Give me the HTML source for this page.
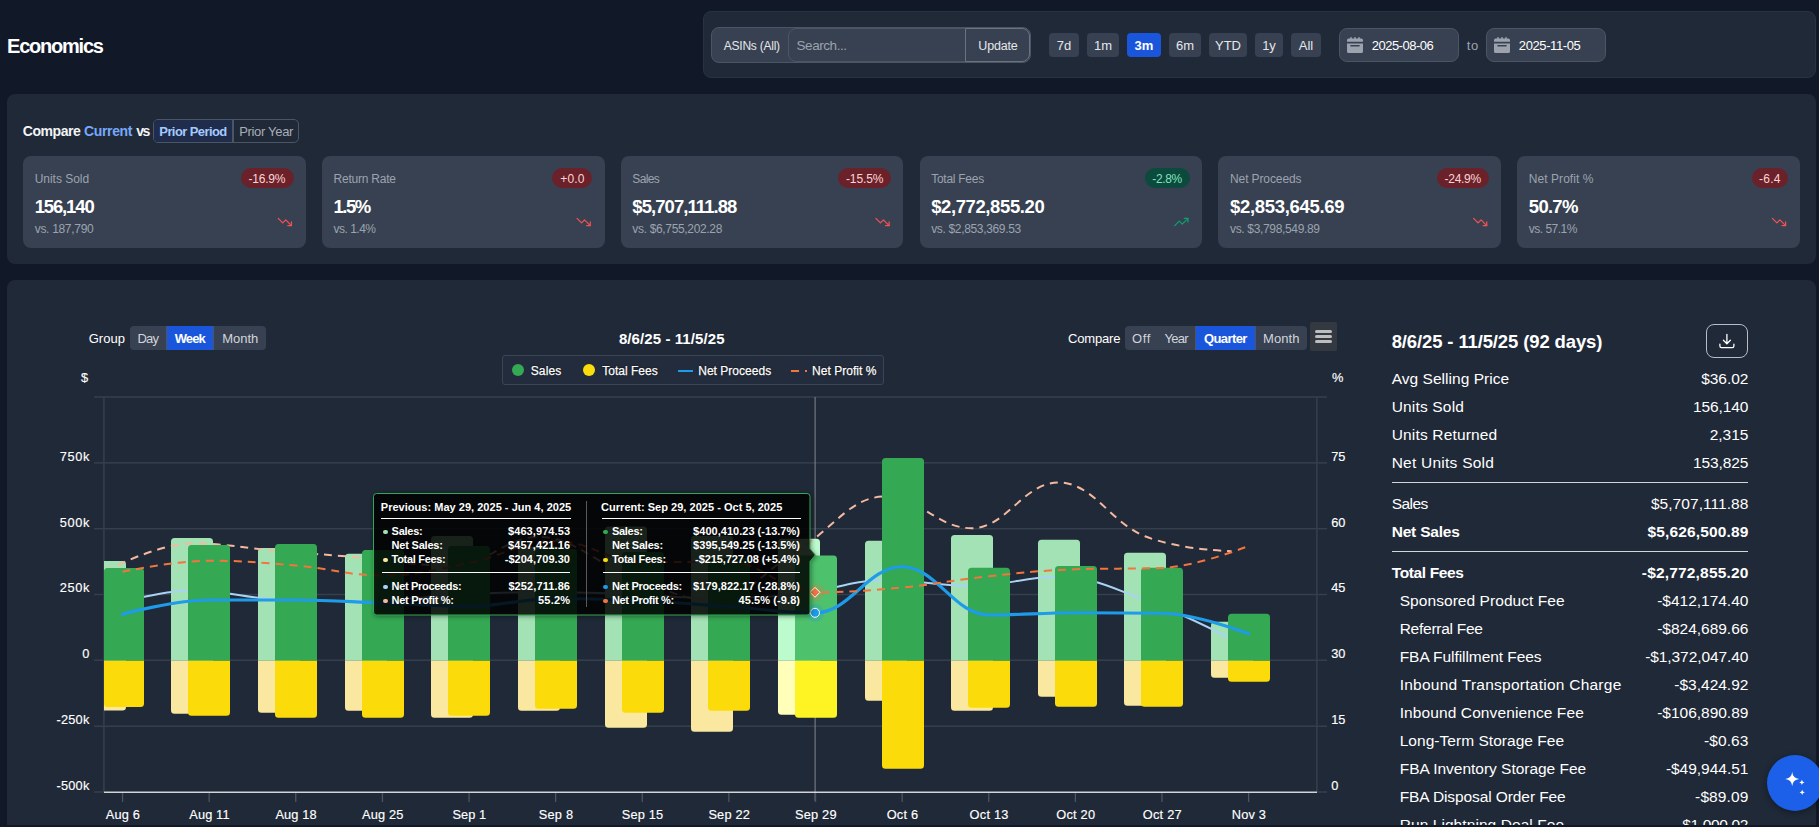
<!DOCTYPE html>
<html lang="en"><head><meta charset="utf-8"><title>Economics</title>
<style>
html,body{margin:0;padding:0;}
body{width:1819px;height:827px;overflow:hidden;background:#111827;position:relative;font-family:"Liberation Sans", sans-serif;}
.b{position:absolute;box-sizing:border-box;}
.t{position:absolute;white-space:nowrap;font-family:"Liberation Sans", sans-serif;}
.hc{text-shadow:0 0 1px rgba(0,0,0,.9),0 0 2px rgba(0,0,0,.6);}
svg{position:absolute;left:0;top:0;}
</style></head>
<body>
<span class="t" style="left:7.00px;top:32px;font-size:20px;line-height:28px;color:#fff;font-weight:700;letter-spacing:-1.213px;">Economics</span>
<div class="b" style="left:703px;top:11px;width:1113px;height:67px;background:#1f2937;border:1px solid #283242;border-radius:8px;"></div>
<div class="b" style="left:711px;top:27px;width:320px;height:36px;background:#374151;border:1px solid #4b5563;border-radius:8px;"></div>
<div class="b" style="left:788px;top:28px;width:178px;height:34px;background:#374151;border:1px solid #4b5563;border-radius:8px 0 0 8px;"></div>
<div class="b" style="left:965px;top:28px;width:65px;height:34px;background:#374151;border:1px solid #6b7280;border-radius:0 8px 8px 0;border-left:1px solid #6b7280;"></div>
<span class="t" style="left:723.80px;top:38px;font-size:12px;line-height:17px;color:#e5e7eb;letter-spacing:-0.237px;">ASINs (All)</span>
<span class="t" style="left:796.50px;top:36px;font-size:13.5px;line-height:19px;color:#9ca3af;letter-spacing:-0.441px;">Search...</span>
<span class="t" style="left:978.30px;top:37px;font-size:12.5px;line-height:18px;color:#e5e7eb;letter-spacing:-0.163px;">Update</span>
<div class="b" style="left:1049px;top:33px;width:30px;height:24px;background:#374151;border-radius:4px;"></div>
<span class="t" style="left:1056.77px;top:37px;font-size:13px;line-height:18px;color:#e5e7eb;">7d</span>
<div class="b" style="left:1087px;top:33px;width:32px;height:24px;background:#374151;border-radius:4px;"></div>
<span class="t" style="left:1093.97px;top:37px;font-size:13px;line-height:18px;color:#e5e7eb;">1m</span>
<div class="b" style="left:1127px;top:33px;width:34px;height:24px;background:#1a56db;border-radius:4px;"></div>
<span class="t" style="left:1134.60px;top:37px;font-size:13px;line-height:18px;color:#fff;font-weight:700;">3m</span>
<div class="b" style="left:1169px;top:33px;width:32px;height:24px;background:#374151;border-radius:4px;"></div>
<span class="t" style="left:1175.97px;top:37px;font-size:13px;line-height:18px;color:#e5e7eb;">6m</span>
<div class="b" style="left:1209px;top:33px;width:38px;height:24px;background:#374151;border-radius:4px;"></div>
<span class="t" style="left:1215.00px;top:37px;font-size:13px;line-height:18px;color:#e5e7eb;">YTD</span>
<div class="b" style="left:1255px;top:33px;width:28px;height:24px;background:#374151;border-radius:4px;"></div>
<span class="t" style="left:1262.13px;top:37px;font-size:13px;line-height:18px;color:#e5e7eb;">1y</span>
<div class="b" style="left:1291px;top:33px;width:30px;height:24px;background:#374151;border-radius:4px;"></div>
<span class="t" style="left:1298.77px;top:37px;font-size:13px;line-height:18px;color:#e5e7eb;">All</span>
<div class="b" style="left:1339px;top:28px;width:120px;height:34px;background:#374151;border:1px solid #4b5563;border-radius:8px;"></div>
<svg style="left:1347px;top:37px" width="16" height="16" viewBox="0 0 20 20"><path fill="#9ca3af" d="M20 4a2 2 0 0 0-2-2h-2V1a1 1 0 0 0-2 0v1h-3V1a1 1 0 0 0-2 0v1H6V1a1 1 0 0 0-2 0v1H2a2 2 0 0 0-2 2v2h20V4ZM0 18a2 2 0 0 0 2 2h16a2 2 0 0 0 2-2V8H0v10Zm5-8h10a1 1 0 0 1 0 2H5a1 1 0 0 1 0-2Z"/></svg>
<span class="t" style="left:1371.70px;top:37px;font-size:13px;line-height:18px;color:#fff;letter-spacing:-0.500px;">2025-08-06</span>
<div class="b" style="left:1486px;top:28px;width:120px;height:34px;background:#374151;border:1px solid #4b5563;border-radius:8px;"></div>
<svg style="left:1494px;top:37px" width="16" height="16" viewBox="0 0 20 20"><path fill="#9ca3af" d="M20 4a2 2 0 0 0-2-2h-2V1a1 1 0 0 0-2 0v1h-3V1a1 1 0 0 0-2 0v1H6V1a1 1 0 0 0-2 0v1H2a2 2 0 0 0-2 2v2h20V4ZM0 18a2 2 0 0 0 2 2h16a2 2 0 0 0 2-2V8H0v10Zm5-8h10a1 1 0 0 1 0 2H5a1 1 0 0 1 0-2Z"/></svg>
<span class="t" style="left:1518.80px;top:37px;font-size:13px;line-height:18px;color:#fff;letter-spacing:-0.394px;">2025-11-05</span>
<span class="t" style="left:1466.80px;top:37px;font-size:13px;line-height:18px;color:#9ca3af;letter-spacing:0.656px;">to</span>
<div class="b" style="left:7px;top:94px;width:1809px;height:170px;background:#1f2937;border-radius:8px;"></div>
<span class="t" style="left:22.80px;top:121px;font-size:14px;line-height:20px;color:#f3f4f6;font-weight:700;letter-spacing:-0.448px;">Compare</span>
<span class="t" style="left:84.10px;top:121px;font-size:14px;line-height:20px;color:#76a9fa;font-weight:700;letter-spacing:-0.377px;">Current</span>
<span class="t" style="left:136.20px;top:121px;font-size:14px;line-height:20px;color:#f3f4f6;font-weight:700;letter-spacing:-1.500px;">vs</span>
<div class="b" style="left:153px;top:119px;width:146px;height:24px;border:1px solid #4b5563;border-radius:5px;"></div>
<div class="b" style="left:154px;top:120px;width:79.5px;height:22px;background:#202c4c;border-radius:4px 0 0 4px;border-right:2px solid #4b5563;"></div>
<span class="t" style="left:159.30px;top:123px;font-size:13px;line-height:18px;color:#a4cafe;font-weight:700;letter-spacing:-0.584px;">Prior Period</span>
<span class="t" style="left:239.20px;top:123px;font-size:13px;line-height:18px;color:#a9aeb8;letter-spacing:-0.322px;">Prior Year</span>
<div class="b" style="left:23.0px;top:156px;width:282.83px;height:92px;background:#374151;border-radius:8px;"></div>
<span class="t" style="left:34.70px;top:171px;font-size:12px;line-height:17px;color:#9ca3af;letter-spacing:-0.023px;">Units Sold</span>
<span class="t" style="left:34.70px;top:194px;font-size:18.5px;line-height:26px;color:#fff;font-weight:700;letter-spacing:-1.146px;">156,140</span>
<span class="t" style="left:34.70px;top:221px;font-size:12px;line-height:17px;color:#9ca3af;letter-spacing:-0.305px;">vs. 187,790</span>
<div class="b" style="left:240.52999999999997px;top:168px;width:53px;height:20px;background:#6b2129;border-radius:10px;"></div>
<span class="t" style="left:248.53px;top:171px;font-size:12px;line-height:17px;color:#fbd5d5;letter-spacing:-0.206px;">-16.9%</span>
<svg width="1819" height="300" viewBox="0 0 1819 300"><g transform="translate(277.63 214.8) scale(0.6)" fill="none" stroke="#f05252" stroke-width="2.1" stroke-linecap="round" stroke-linejoin="round"><polyline points="23 18 13.5 8.5 8.5 13.5 1 6"/><polyline points="17 18 23 18 23 12"/></g></svg>
<div class="b" style="left:321.83px;top:156px;width:282.83px;height:92px;background:#374151;border-radius:8px;"></div>
<span class="t" style="left:333.53px;top:171px;font-size:12px;line-height:17px;color:#9ca3af;letter-spacing:-0.220px;">Return Rate</span>
<span class="t" style="left:333.53px;top:194px;font-size:18.5px;line-height:26px;color:#fff;font-weight:700;letter-spacing:-1.500px;">1.5%</span>
<span class="t" style="left:333.53px;top:221px;font-size:12px;line-height:17px;color:#9ca3af;letter-spacing:-0.504px;">vs. 1.4%</span>
<div class="b" style="left:552.36px;top:168px;width:40px;height:20px;background:#6b2129;border-radius:10px;"></div>
<span class="t" style="left:560.36px;top:171px;font-size:12px;line-height:17px;color:#fbd5d5;letter-spacing:0.099px;">+0.0</span>
<svg width="1819" height="300" viewBox="0 0 1819 300"><g transform="translate(576.46 214.8) scale(0.6)" fill="none" stroke="#f05252" stroke-width="2.1" stroke-linecap="round" stroke-linejoin="round"><polyline points="23 18 13.5 8.5 8.5 13.5 1 6"/><polyline points="17 18 23 18 23 12"/></g></svg>
<div class="b" style="left:620.67px;top:156px;width:282.83px;height:92px;background:#374151;border-radius:8px;"></div>
<span class="t" style="left:632.37px;top:171px;font-size:12px;line-height:17px;color:#9ca3af;letter-spacing:-0.633px;">Sales</span>
<span class="t" style="left:632.37px;top:194px;font-size:18.5px;line-height:26px;color:#fff;font-weight:700;letter-spacing:-0.940px;">$5,707,111.88</span>
<span class="t" style="left:632.37px;top:221px;font-size:12px;line-height:17px;color:#9ca3af;letter-spacing:-0.339px;">vs. $6,755,202.28</span>
<div class="b" style="left:838.2px;top:168px;width:53px;height:20px;background:#6b2129;border-radius:10px;"></div>
<span class="t" style="left:845.95px;top:171px;font-size:12px;line-height:17px;color:#fbd5d5;letter-spacing:-0.106px;">-15.5%</span>
<svg width="1819" height="300" viewBox="0 0 1819 300"><g transform="translate(875.30 214.8) scale(0.6)" fill="none" stroke="#f05252" stroke-width="2.1" stroke-linecap="round" stroke-linejoin="round"><polyline points="23 18 13.5 8.5 8.5 13.5 1 6"/><polyline points="17 18 23 18 23 12"/></g></svg>
<div class="b" style="left:919.5px;top:156px;width:282.83px;height:92px;background:#374151;border-radius:8px;"></div>
<span class="t" style="left:931.20px;top:171px;font-size:12px;line-height:17px;color:#9ca3af;letter-spacing:-0.262px;">Total Fees</span>
<span class="t" style="left:931.20px;top:194px;font-size:18.5px;line-height:26px;color:#fff;font-weight:700;letter-spacing:-0.401px;">$2,772,855.20</span>
<span class="t" style="left:931.20px;top:221px;font-size:12px;line-height:17px;color:#9ca3af;letter-spacing:-0.339px;">vs. $2,853,369.53</span>
<div class="b" style="left:1144.53px;top:168px;width:45.5px;height:20px;background:#0b4a3c;border-radius:10px;"></div>
<span class="t" style="left:1152.28px;top:171px;font-size:12px;line-height:17px;color:#84e1bc;letter-spacing:-0.340px;">-2.8%</span>
<svg width="1819" height="300" viewBox="0 0 1819 300"><g transform="translate(1174.13 214.8) scale(0.6)" fill="none" stroke="#0e9f6e" stroke-width="2.1" stroke-linecap="round" stroke-linejoin="round"><polyline points="23 6 13.5 15.5 8.5 10.5 1 18"/><polyline points="17 6 23 6 23 12"/></g></svg>
<div class="b" style="left:1218.33px;top:156px;width:282.83px;height:92px;background:#374151;border-radius:8px;"></div>
<span class="t" style="left:1230.03px;top:171px;font-size:12px;line-height:17px;color:#9ca3af;letter-spacing:-0.109px;">Net Proceeds</span>
<span class="t" style="left:1230.03px;top:194px;font-size:18.5px;line-height:26px;color:#fff;font-weight:700;letter-spacing:-0.318px;">$2,853,645.69</span>
<span class="t" style="left:1230.03px;top:221px;font-size:12px;line-height:17px;color:#9ca3af;letter-spacing:-0.339px;">vs. $3,798,549.89</span>
<div class="b" style="left:1436.86px;top:168px;width:52px;height:20px;background:#6b2129;border-radius:10px;"></div>
<span class="t" style="left:1444.61px;top:171px;font-size:12px;line-height:17px;color:#fbd5d5;letter-spacing:-0.306px;">-24.9%</span>
<svg width="1819" height="300" viewBox="0 0 1819 300"><g transform="translate(1472.96 214.8) scale(0.6)" fill="none" stroke="#f05252" stroke-width="2.1" stroke-linecap="round" stroke-linejoin="round"><polyline points="23 18 13.5 8.5 8.5 13.5 1 6"/><polyline points="17 18 23 18 23 12"/></g></svg>
<div class="b" style="left:1517.17px;top:156px;width:282.83px;height:92px;background:#374151;border-radius:8px;"></div>
<span class="t" style="left:1528.87px;top:171px;font-size:12px;line-height:17px;color:#9ca3af;letter-spacing:0.043px;">Net Profit %</span>
<span class="t" style="left:1528.87px;top:194px;font-size:18.5px;line-height:26px;color:#fff;font-weight:700;letter-spacing:-0.742px;">50.7%</span>
<span class="t" style="left:1528.87px;top:221px;font-size:12px;line-height:17px;color:#9ca3af;letter-spacing:-0.525px;">vs. 57.1%</span>
<div class="b" style="left:1751.7px;top:168px;width:36px;height:20px;background:#6b2129;border-radius:10px;"></div>
<span class="t" style="left:1758.95px;top:171px;font-size:12px;line-height:17px;color:#fbd5d5;letter-spacing:0.271px;">-6.4</span>
<svg width="1819" height="300" viewBox="0 0 1819 300"><g transform="translate(1771.80 214.8) scale(0.6)" fill="none" stroke="#f05252" stroke-width="2.1" stroke-linecap="round" stroke-linejoin="round"><polyline points="23 18 13.5 8.5 8.5 13.5 1 6"/><polyline points="17 18 23 18 23 12"/></g></svg>
<div class="b" style="left:7px;top:280px;width:1809px;height:545px;background:#1f2937;border-radius:8px 8px 0 0;"></div>
<span class="t" style="left:88.70px;top:330px;font-size:13px;line-height:18px;color:#fff;letter-spacing:0.015px;">Group</span>
<div class="b" style="left:130px;top:326px;width:136px;height:24px;background:#374151;border-radius:4px;"></div>
<div class="b" style="left:166px;top:326px;width:48px;height:24px;background:#1a56db;border-left:1px solid #4b5563;border-right:1px solid #4b5563;"></div>
<span class="t" style="left:137.50px;top:330px;font-size:13px;line-height:18px;color:#d1d5db;letter-spacing:-0.812px;">Day</span>
<span class="t" style="left:174.70px;top:330px;font-size:13px;line-height:18px;color:#fff;font-weight:700;letter-spacing:-0.911px;">Week</span>
<span class="t" style="left:222.30px;top:330px;font-size:13px;line-height:18px;color:#d1d5db;letter-spacing:-0.035px;">Month</span>
<span class="t" style="left:618.90px;top:328px;font-size:15px;line-height:21px;color:#fff;font-weight:700;letter-spacing:0.089px;">8/6/25 - 11/5/25</span>
<span class="t" style="left:1067.90px;top:330px;font-size:13px;line-height:18px;color:#fff;letter-spacing:-0.145px;">Compare</span>
<div class="b" style="left:1125px;top:326px;width:182px;height:24px;background:#374151;border-radius:4px;"></div>
<div class="b" style="left:1195px;top:326px;width:61px;height:24px;background:#1a56db;border-left:1px solid #4b5563;border-right:1px solid #4b5563;"></div>
<span class="t" style="left:1131.95px;top:330px;font-size:13px;line-height:18px;color:#d1d5db;letter-spacing:0.695px;">Off</span>
<span class="t" style="left:1164.50px;top:330px;font-size:13px;line-height:18px;color:#d1d5db;letter-spacing:-0.760px;">Year</span>
<span class="t" style="left:1203.95px;top:330px;font-size:13px;line-height:18px;color:#fff;font-weight:700;letter-spacing:-0.578px;">Quarter</span>
<span class="t" style="left:1263.05px;top:330px;font-size:13px;line-height:18px;color:#d1d5db;letter-spacing:0.090px;">Month</span>
<div class="b" style="left:1309.5px;top:322.3px;width:27.7px;height:28.4px;background:#343841;border-radius:2px;"></div>
<div class="b" style="left:1315.3px;top:330px;width:16.8px;height:3.2px;background:#bebebe;border-radius:1.6px;"></div>
<div class="b" style="left:1315.3px;top:335px;width:16.8px;height:3.2px;background:#bebebe;border-radius:1.6px;"></div>
<div class="b" style="left:1315.3px;top:340px;width:16.8px;height:3.2px;background:#bebebe;border-radius:1.6px;"></div>
<div class="b" style="left:502px;top:355px;width:382px;height:30px;background:#232c3c;border:1px solid #3c4554;border-radius:3px;"></div>
<div class="b" style="left:512px;top:364px;width:12px;height:12px;border-radius:6px;background:#34a853"></div>
<div class="b" style="left:583px;top:364px;width:12px;height:12px;border-radius:6px;background:#fbdc0c"></div>
<div class="b" style="left:678px;top:370px;width:15px;height:2px;background:#1e9be9;"></div>
<div class="b" style="left:791px;top:370px;width:8px;height:2px;background:#f3743e;"></div>
<div class="b" style="left:805px;top:370px;width:2px;height:2px;background:#f3743e;"></div>
<span class="t hc" style="left:530.70px;top:363px;font-size:12px;line-height:17px;color:#fff;letter-spacing:0.142px;-webkit-text-stroke:0.25px #fff;">Sales</span>
<span class="t hc" style="left:602.20px;top:363px;font-size:12px;line-height:17px;color:#fff;letter-spacing:0.016px;-webkit-text-stroke:0.25px #fff;">Total Fees</span>
<span class="t hc" style="left:698.20px;top:363px;font-size:12px;line-height:17px;color:#fff;letter-spacing:0.027px;-webkit-text-stroke:0.25px #fff;">Net Proceeds</span>
<span class="t hc" style="left:812.00px;top:363px;font-size:12px;line-height:17px;color:#fff;letter-spacing:0.034px;-webkit-text-stroke:0.25px #fff;">Net Profit %</span>
<span class="t" style="left:81.10px;top:369px;font-size:12.8px;line-height:18px;color:#fff;-webkit-text-stroke:0.15px #fff;">$</span>
<span class="t" style="left:1332.10px;top:369px;font-size:12.8px;line-height:18px;color:#fff;-webkit-text-stroke:0.15px #fff;">%</span>
<svg width="1819" height="827" viewBox="0 0 1819 827">
<defs><clipPath id="cp"><rect x="104" y="397" width="1213" height="395"/></clipPath></defs>
<rect x="94" y="396.25" width="1233" height="1.5" fill="#363f4e"/>
<rect x="94" y="462.10" width="1233" height="1.5" fill="#363f4e"/>
<rect x="94" y="527.95" width="1233" height="1.5" fill="#363f4e"/>
<rect x="94" y="593.75" width="1233" height="1.5" fill="#363f4e"/>
<rect x="94" y="659.45" width="1233" height="1.5" fill="#363f4e"/>
<rect x="94" y="725.45" width="1233" height="1.5" fill="#363f4e"/>
<rect x="94" y="791.25" width="1233" height="1.5" fill="#363f4e"/>
<rect x="103.15" y="397" width="1.5" height="395" fill="#363f4e"/>
<rect x="1316.15" y="397" width="1.5" height="395" fill="#363f4e"/>
<rect x="814.6" y="397" width="1" height="404" fill="#83878e"/>
<g clip-path="url(#cp)">
<path d="M84 660.8V564.5A3.5 3.5 0 0 1 87.5 561H122.5A3.5 3.5 0 0 1 126 564.5V660.8Z" fill="#a3e2b5"/>
<path d="M84 660.8V707.0A3.5 3.5 0 0 0 87.5 710.5H122.5A3.5 3.5 0 0 0 126 707.0V660.8Z" fill="#fae8a0"/>
<path d="M171 660.8V541.5A3.5 3.5 0 0 1 174.5 538H209.5A3.5 3.5 0 0 1 213 541.5V660.8Z" fill="#a3e2b5"/>
<path d="M171 660.8V710.25A3.5 3.5 0 0 0 174.5 713.75H209.5A3.5 3.5 0 0 0 213 710.25V660.8Z" fill="#fae8a0"/>
<path d="M258 660.8V551.5A3.5 3.5 0 0 1 261.5 548H296.5A3.5 3.5 0 0 1 300 551.5V660.8Z" fill="#a3e2b5"/>
<path d="M258 660.8V709.25A3.5 3.5 0 0 0 261.5 712.75H296.5A3.5 3.5 0 0 0 300 709.25V660.8Z" fill="#fae8a0"/>
<path d="M345 660.8V557.25A3.5 3.5 0 0 1 348.5 553.75H383.5A3.5 3.5 0 0 1 387 557.25V660.8Z" fill="#a3e2b5"/>
<path d="M345 660.8V707.25A3.5 3.5 0 0 0 348.5 710.75H383.5A3.5 3.5 0 0 0 387 707.25V660.8Z" fill="#fae8a0"/>
<path d="M431 660.8V539.5A3.5 3.5 0 0 1 434.5 536H469.5A3.5 3.5 0 0 1 473 539.5V660.8Z" fill="#a3e2b5"/>
<path d="M431 660.8V714.25A3.5 3.5 0 0 0 434.5 717.75H469.5A3.5 3.5 0 0 0 473 714.25V660.8Z" fill="#fae8a0"/>
<path d="M518 660.8V549.9A3.5 3.5 0 0 1 521.5 546.4H556.5A3.5 3.5 0 0 1 560 549.9V660.8Z" fill="#a3e2b5"/>
<path d="M518 660.8V707.25A3.5 3.5 0 0 0 521.5 710.75H556.5A3.5 3.5 0 0 0 560 707.25V660.8Z" fill="#fae8a0"/>
<path d="M605 660.8V530.1A3.5 3.5 0 0 1 608.5 526.6H643.5A3.5 3.5 0 0 1 647 530.1V660.8Z" fill="#a3e2b5"/>
<path d="M605 660.8V724.25A3.5 3.5 0 0 0 608.5 727.75H643.5A3.5 3.5 0 0 0 647 724.25V660.8Z" fill="#fae8a0"/>
<path d="M691 660.8V539.2A3.5 3.5 0 0 1 694.5 535.7H729.5A3.5 3.5 0 0 1 733 539.2V660.8Z" fill="#a3e2b5"/>
<path d="M691 660.8V728.25A3.5 3.5 0 0 0 694.5 731.75H729.5A3.5 3.5 0 0 0 733 728.25V660.8Z" fill="#fae8a0"/>
<path d="M778 660.8V542.25A3.5 3.5 0 0 1 781.5 538.75H816.5A3.5 3.5 0 0 1 820 542.25V660.8Z" fill="#bcfbce"/>
<path d="M778 660.8V711.25A3.5 3.5 0 0 0 781.5 714.75H816.5A3.5 3.5 0 0 0 820 711.25V660.8Z" fill="#ffffb9"/>
<path d="M865 660.8V544.25A3.5 3.5 0 0 1 868.5 540.75H903.5A3.5 3.5 0 0 1 907 544.25V660.8Z" fill="#a3e2b5"/>
<path d="M865 660.8V697.25A3.5 3.5 0 0 0 868.5 700.75H903.5A3.5 3.5 0 0 0 907 697.25V660.8Z" fill="#fae8a0"/>
<path d="M951 660.8V538.5A3.5 3.5 0 0 1 954.5 535H989.5A3.5 3.5 0 0 1 993 538.5V660.8Z" fill="#a3e2b5"/>
<path d="M951 660.8V707.25A3.5 3.5 0 0 0 954.5 710.75H989.5A3.5 3.5 0 0 0 993 707.25V660.8Z" fill="#fae8a0"/>
<path d="M1038 660.8V543.25A3.5 3.5 0 0 1 1041.5 539.75H1076.5A3.5 3.5 0 0 1 1080 543.25V660.8Z" fill="#a3e2b5"/>
<path d="M1038 660.8V693.25A3.5 3.5 0 0 0 1041.5 696.75H1076.5A3.5 3.5 0 0 0 1080 693.25V660.8Z" fill="#fae8a0"/>
<path d="M1124 660.8V556.25A3.5 3.5 0 0 1 1127.5 552.75H1162.5A3.5 3.5 0 0 1 1166 556.25V660.8Z" fill="#a3e2b5"/>
<path d="M1124 660.8V702.25A3.5 3.5 0 0 0 1127.5 705.75H1162.5A3.5 3.5 0 0 0 1166 702.25V660.8Z" fill="#fae8a0"/>
<path d="M1211 660.8V625.25A3.5 3.5 0 0 1 1214.5 621.75H1249.5A3.5 3.5 0 0 1 1253 625.25V660.8Z" fill="#a3e2b5"/>
<path d="M1211 660.8V674.25A3.5 3.5 0 0 0 1214.5 677.75H1249.5A3.5 3.5 0 0 0 1253 674.25V660.8Z" fill="#fae8a0"/>
<path d="M105.50 607.00C105.50 607.00 157.47 590.50 192.12 590.50C226.77 590.50 244.09 598.00 278.74 599.50C313.39 601.00 330.71 601.00 365.36 601.00C400.01 601.00 417.33 596.80 451.98 595.00C486.63 593.20 503.95 592.00 538.60 592.00C573.25 592.00 590.57 592.80 625.22 594.00C659.87 595.20 677.19 598.00 711.84 598.00C746.49 598.00 763.81 597.60 798.46 594.00C833.11 590.40 850.43 580.00 885.08 580.00C919.73 580.00 937.05 586.00 971.70 586.00C1006.35 586.00 1023.67 576.75 1058.32 576.75C1092.97 576.75 1110.29 587.55 1144.94 600.00C1179.59 612.45 1231.56 639.00 1231.56 639.00" fill="none" stroke="#a9d3f5" stroke-width="2" stroke-linecap="round"/>
<path d="M105.50 571.00C105.50 571.00 157.47 543.50 192.12 543.50C226.77 543.50 244.09 548.10 278.74 551.00C313.39 553.90 330.71 555.00 365.36 558.00C400.01 561.00 417.33 566.00 451.98 566.00C486.63 566.00 503.95 537.00 538.60 537.00C573.25 537.00 590.57 560.40 625.22 573.00C659.87 585.60 677.19 600.00 711.84 600.00C746.49 600.00 763.81 570.40 798.46 549.70C833.11 529.00 850.43 496.50 885.08 496.50C919.73 496.50 937.05 528.25 971.70 528.25C1006.35 528.25 1023.67 482.50 1058.32 482.50C1092.97 482.50 1110.29 522.50 1144.94 536.25C1179.59 550.00 1231.56 551.25 1231.56 551.25" fill="none" stroke="#f4b9a0" stroke-width="2" stroke-dasharray="8 6"/>
<path d="M104 660.8V571.5A3.5 3.5 0 0 1 107.5 568H140.5A3.5 3.5 0 0 1 144 571.5V660.8Z" fill="#34a853"/>
<path d="M104 660.8V703.5A3.5 3.5 0 0 0 107.5 707H140.5A3.5 3.5 0 0 0 144 703.5V660.8Z" fill="#fbdc0a"/>
<path d="M188 660.8V548.5A3.5 3.5 0 0 1 191.5 545H226.5A3.5 3.5 0 0 1 230 548.5V660.8Z" fill="#34a853"/>
<path d="M188 660.8V712.25A3.5 3.5 0 0 0 191.5 715.75H226.5A3.5 3.5 0 0 0 230 712.25V660.8Z" fill="#fbdc0a"/>
<path d="M275 660.8V547.5A3.5 3.5 0 0 1 278.5 544H313.5A3.5 3.5 0 0 1 317 547.5V660.8Z" fill="#34a853"/>
<path d="M275 660.8V714.25A3.5 3.5 0 0 0 278.5 717.75H313.5A3.5 3.5 0 0 0 317 714.25V660.8Z" fill="#fbdc0a"/>
<path d="M362 660.8V553.5A3.5 3.5 0 0 1 365.5 550H400.5A3.5 3.5 0 0 1 404 553.5V660.8Z" fill="#34a853"/>
<path d="M362 660.8V714.25A3.5 3.5 0 0 0 365.5 717.75H400.5A3.5 3.5 0 0 0 404 714.25V660.8Z" fill="#fbdc0a"/>
<path d="M448 660.8V549.5A3.5 3.5 0 0 1 451.5 546H486.5A3.5 3.5 0 0 1 490 549.5V660.8Z" fill="#34a853"/>
<path d="M448 660.8V712.25A3.5 3.5 0 0 0 451.5 715.75H486.5A3.5 3.5 0 0 0 490 712.25V660.8Z" fill="#fbdc0a"/>
<path d="M535 660.8V552.5A3.5 3.5 0 0 1 538.5 549H573.5A3.5 3.5 0 0 1 577 552.5V660.8Z" fill="#34a853"/>
<path d="M535 660.8V705.25A3.5 3.5 0 0 0 538.5 708.75H573.5A3.5 3.5 0 0 0 577 705.25V660.8Z" fill="#fbdc0a"/>
<path d="M622 660.8V555.5A3.5 3.5 0 0 1 625.5 552H660.5A3.5 3.5 0 0 1 664 555.5V660.8Z" fill="#34a853"/>
<path d="M622 660.8V709.25A3.5 3.5 0 0 0 625.5 712.75H660.5A3.5 3.5 0 0 0 664 709.25V660.8Z" fill="#fbdc0a"/>
<path d="M708 660.8V561.5A3.5 3.5 0 0 1 711.5 558H746.5A3.5 3.5 0 0 1 750 561.5V660.8Z" fill="#34a853"/>
<path d="M708 660.8V707.25A3.5 3.5 0 0 0 711.5 710.75H746.5A3.5 3.5 0 0 0 750 707.25V660.8Z" fill="#fbdc0a"/>
<path d="M795 660.8V559.0A3.5 3.5 0 0 1 798.5 555.5H833.5A3.5 3.5 0 0 1 837 559.0V660.8Z" fill="#4dc16c"/>
<path d="M795 660.8V714.25A3.5 3.5 0 0 0 798.5 717.75H833.5A3.5 3.5 0 0 0 837 714.25V660.8Z" fill="#fff423"/>
<path d="M882 660.8V461.5A3.5 3.5 0 0 1 885.5 458H920.5A3.5 3.5 0 0 1 924 461.5V660.8Z" fill="#34a853"/>
<path d="M882 660.8V765.25A3.5 3.5 0 0 0 885.5 768.75H920.5A3.5 3.5 0 0 0 924 765.25V660.8Z" fill="#fbdc0a"/>
<path d="M968 660.8V571.25A3.5 3.5 0 0 1 971.5 567.75H1006.5A3.5 3.5 0 0 1 1010 571.25V660.8Z" fill="#34a853"/>
<path d="M968 660.8V704.25A3.5 3.5 0 0 0 971.5 707.75H1006.5A3.5 3.5 0 0 0 1010 704.25V660.8Z" fill="#fbdc0a"/>
<path d="M1055 660.8V569.5A3.5 3.5 0 0 1 1058.5 566H1093.5A3.5 3.5 0 0 1 1097 569.5V660.8Z" fill="#34a853"/>
<path d="M1055 660.8V703.25A3.5 3.5 0 0 0 1058.5 706.75H1093.5A3.5 3.5 0 0 0 1097 703.25V660.8Z" fill="#fbdc0a"/>
<path d="M1141 660.8V571.25A3.5 3.5 0 0 1 1144.5 567.75H1179.5A3.5 3.5 0 0 1 1183 571.25V660.8Z" fill="#34a853"/>
<path d="M1141 660.8V703.25A3.5 3.5 0 0 0 1144.5 706.75H1179.5A3.5 3.5 0 0 0 1183 703.25V660.8Z" fill="#fbdc0a"/>
<path d="M1228 660.8V617.25A3.5 3.5 0 0 1 1231.5 613.75H1266.5A3.5 3.5 0 0 1 1270 617.25V660.8Z" fill="#34a853"/>
<path d="M1228 660.8V678.25A3.5 3.5 0 0 0 1231.5 681.75H1266.5A3.5 3.5 0 0 0 1270 678.25V660.8Z" fill="#fbdc0a"/>
</g>
<path d="M122.50 614.25C122.50 614.25 174.47 600.00 209.12 600.00C243.77 600.00 261.09 600.00 295.74 600.00C330.39 600.00 347.71 601.76 382.36 603.00C417.01 604.24 434.33 606.20 468.98 606.20C503.63 606.20 520.95 598.50 555.60 598.50C590.25 598.50 607.57 599.40 642.22 601.00C676.87 602.60 694.19 604.14 728.84 606.50C763.49 608.86 780.81 612.80 815.46 612.80C850.11 612.80 867.43 566.75 902.08 566.75C936.73 566.75 954.05 615.00 988.70 615.00C1023.35 615.00 1040.67 612.75 1075.32 612.75C1109.97 612.75 1127.29 612.75 1161.94 613.25C1196.59 613.75 1248.56 633.75 1248.56 633.75" fill="none" stroke="#1e9be9" stroke-width="3.2" stroke-linecap="round" stroke-linejoin="round"/>
<path d="M122.50 571.75C122.50 571.75 174.47 560.75 209.12 560.75C243.77 560.75 261.09 562.55 295.74 565.50C330.39 568.45 347.71 575.50 382.36 575.50C417.01 575.50 434.33 569.90 468.98 563.00C503.63 556.10 520.95 541.00 555.60 541.00C590.25 541.00 607.57 562.00 642.22 562.00C676.87 562.00 694.19 562.00 728.84 562.00C763.49 562.00 780.81 592.30 815.46 592.30C850.11 592.30 867.43 590.71 902.08 587.50C936.73 584.29 954.05 579.90 988.70 576.25C1023.35 572.60 1040.67 570.50 1075.32 569.25C1109.97 568.00 1127.29 569.25 1161.94 568.00C1196.59 566.75 1248.56 546.00 1248.56 546.00" fill="none" stroke="#f3743e" stroke-width="2" stroke-dasharray="8 6"/>
<circle cx="815" cy="592.3" r="9" fill="#f3743e" fill-opacity="0.25"/>
<path d="M815 587.3L820 592.3L815 597.3L810 592.3Z" fill="#f3743e" stroke="#fff" stroke-width="1"/>
<circle cx="815" cy="612.8" r="9" fill="#1e9be9" fill-opacity="0.25"/>
<circle cx="815" cy="612.8" r="4.5" fill="#1e9be9" stroke="#fff" stroke-width="1"/>
<rect x="104" y="791.6" width="1213" height="1.3" fill="#e6e6e6"/>
<rect x="121.9" y="793" width="1.3" height="9" fill="#4b5563"/>
<rect x="208.5" y="793" width="1.3" height="9" fill="#4b5563"/>
<rect x="295.1" y="793" width="1.3" height="9" fill="#4b5563"/>
<rect x="381.8" y="793" width="1.3" height="9" fill="#4b5563"/>
<rect x="468.4" y="793" width="1.3" height="9" fill="#4b5563"/>
<rect x="555.0" y="793" width="1.3" height="9" fill="#4b5563"/>
<rect x="641.6" y="793" width="1.3" height="9" fill="#4b5563"/>
<rect x="728.2" y="793" width="1.3" height="9" fill="#4b5563"/>
<rect x="814.9" y="793" width="1.3" height="9" fill="#4b5563"/>
<rect x="901.5" y="793" width="1.3" height="9" fill="#4b5563"/>
<rect x="988.1" y="793" width="1.3" height="9" fill="#4b5563"/>
<rect x="1074.7" y="793" width="1.3" height="9" fill="#4b5563"/>
<rect x="1161.3" y="793" width="1.3" height="9" fill="#4b5563"/>
<rect x="1248.0" y="793" width="1.3" height="9" fill="#4b5563"/>
</svg>
<span class="t" style="left:59.80px;top:448px;font-size:12.8px;line-height:18px;color:#fff;letter-spacing:0.583px;-webkit-text-stroke:0.15px #fff;">750k</span>
<span class="t" style="left:59.80px;top:514px;font-size:12.8px;line-height:18px;color:#fff;letter-spacing:0.583px;-webkit-text-stroke:0.15px #fff;">500k</span>
<span class="t" style="left:59.80px;top:579px;font-size:12.8px;line-height:18px;color:#fff;letter-spacing:0.583px;-webkit-text-stroke:0.15px #fff;">250k</span>
<span class="t" style="left:82.17px;top:645px;font-size:12.8px;line-height:18px;color:#fff;-webkit-text-stroke:0.15px #fff;">0</span>
<span class="t" style="left:56.50px;top:711px;font-size:12.8px;line-height:18px;color:#fff;letter-spacing:0.196px;-webkit-text-stroke:0.15px #fff;">-250k</span>
<span class="t" style="left:56.50px;top:777px;font-size:12.8px;line-height:18px;color:#fff;letter-spacing:0.196px;-webkit-text-stroke:0.15px #fff;">-500k</span>
<span class="t" style="left:1331.30px;top:448px;font-size:12.8px;line-height:18px;color:#fff;letter-spacing:-0.234px;-webkit-text-stroke:0.15px #fff;">75</span>
<span class="t" style="left:1331.30px;top:514px;font-size:12.8px;line-height:18px;color:#fff;letter-spacing:-0.234px;-webkit-text-stroke:0.15px #fff;">60</span>
<span class="t" style="left:1331.30px;top:579px;font-size:12.8px;line-height:18px;color:#fff;letter-spacing:-0.234px;-webkit-text-stroke:0.15px #fff;">45</span>
<span class="t" style="left:1331.30px;top:645px;font-size:12.8px;line-height:18px;color:#fff;letter-spacing:-0.234px;-webkit-text-stroke:0.15px #fff;">30</span>
<span class="t" style="left:1331.30px;top:711px;font-size:12.8px;line-height:18px;color:#fff;letter-spacing:-0.234px;-webkit-text-stroke:0.15px #fff;">15</span>
<span class="t" style="left:1331.30px;top:777px;font-size:12.8px;line-height:18px;color:#fff;-webkit-text-stroke:0.15px #fff;">0</span>
<span class="t" style="left:105.65px;top:806px;font-size:12.8px;line-height:18px;color:#fff;letter-spacing:0.212px;-webkit-text-stroke:0.15px #fff;">Aug 6</span>
<span class="t" style="left:189.32px;top:806px;font-size:12.8px;line-height:18px;color:#fff;letter-spacing:0.118px;-webkit-text-stroke:0.15px #fff;">Aug 11</span>
<span class="t" style="left:275.39px;top:806px;font-size:12.8px;line-height:18px;color:#fff;letter-spacing:0.147px;-webkit-text-stroke:0.15px #fff;">Aug 18</span>
<span class="t" style="left:361.91px;top:806px;font-size:12.8px;line-height:18px;color:#fff;letter-spacing:0.188px;-webkit-text-stroke:0.15px #fff;">Aug 25</span>
<span class="t" style="left:452.53px;top:806px;font-size:12.8px;line-height:18px;color:#fff;letter-spacing:0.012px;-webkit-text-stroke:0.15px #fff;">Sep 1</span>
<span class="t" style="left:538.65px;top:806px;font-size:12.8px;line-height:18px;color:#fff;letter-spacing:0.262px;-webkit-text-stroke:0.15px #fff;">Sep 8</span>
<span class="t" style="left:621.87px;top:806px;font-size:12.8px;line-height:18px;color:#fff;letter-spacing:0.147px;-webkit-text-stroke:0.15px #fff;">Sep 15</span>
<span class="t" style="left:708.39px;top:806px;font-size:12.8px;line-height:18px;color:#fff;letter-spacing:0.188px;-webkit-text-stroke:0.15px #fff;">Sep 22</span>
<span class="t" style="left:795.01px;top:806px;font-size:12.8px;line-height:18px;color:#fff;letter-spacing:0.188px;-webkit-text-stroke:0.15px #fff;">Sep 29</span>
<span class="t" style="left:886.63px;top:806px;font-size:12.8px;line-height:18px;color:#fff;letter-spacing:0.227px;-webkit-text-stroke:0.15px #fff;">Oct 6</span>
<span class="t" style="left:969.60px;top:806px;font-size:12.8px;line-height:18px;color:#fff;letter-spacing:0.219px;-webkit-text-stroke:0.15px #fff;">Oct 13</span>
<span class="t" style="left:1056.22px;top:806px;font-size:12.8px;line-height:18px;color:#fff;letter-spacing:0.219px;-webkit-text-stroke:0.15px #fff;">Oct 20</span>
<span class="t" style="left:1142.84px;top:806px;font-size:12.8px;line-height:18px;color:#fff;letter-spacing:0.219px;-webkit-text-stroke:0.15px #fff;">Oct 27</span>
<span class="t" style="left:1231.86px;top:806px;font-size:12.8px;line-height:18px;color:#fff;letter-spacing:0.141px;-webkit-text-stroke:0.15px #fff;">Nov 3</span>
<svg width="1819" height="827" viewBox="0 0 1819 827" style="filter:drop-shadow(1px 1px 2px rgba(0,0,0,.45))"><path d="M376.5 493.5H807Q810 493.5 810 496.5V548.5L815.3 555L810 561.5V612Q810 615 807 615H376.5Q373.5 615 373.5 612V496.5Q373.5 493.5 376.5 493.5Z" fill="rgba(0,0,0,0.775)" stroke="#34a853" stroke-width="1"/></svg>
<span class="t" style="left:380.80px;top:500px;font-size:11px;line-height:14px;color:#fff;font-weight:700;letter-spacing:0.024px;">Previous: May 29, 2025 - Jun 4, 2025</span>
<span class="t" style="left:601.10px;top:500px;font-size:11px;line-height:14px;color:#fff;font-weight:700;letter-spacing:0.024px;">Current: Sep 29, 2025 - Oct 5, 2025</span>
<div class="b" style="left:381px;top:518px;width:190px;height:1.2px;background:#fff;"></div>
<div class="b" style="left:601.5px;top:518px;width:199px;height:1.2px;background:#fff;"></div>
<div class="b" style="left:382px;top:572px;width:188px;height:1.2px;background:#fff;"></div>
<div class="b" style="left:603px;top:572px;width:197px;height:1.2px;background:#fff;"></div>
<div class="b" style="left:586px;top:500.7px;width:1px;height:106px;background:#5a5a5a;"></div>
<div class="b" style="left:382.6px;top:529.9px;width:5.2px;height:4.2px;background:#a3e2b5;border-radius:2px;"></div>
<span class="t" style="left:391.60px;top:524px;font-size:11px;line-height:14px;color:#fff;font-weight:700;letter-spacing:-0.264px;">Sales:</span>
<span class="t" style="left:508.00px;top:524px;font-size:11px;line-height:14px;color:#fff;font-weight:700;letter-spacing:0.083px;">$463,974.53</span>
<span class="t" style="left:391.60px;top:538px;font-size:11px;line-height:14px;color:#fff;font-weight:700;letter-spacing:-0.211px;">Net Sales:</span>
<span class="t" style="left:508.00px;top:538px;font-size:11px;line-height:14px;color:#fff;font-weight:700;letter-spacing:0.083px;">$457,421.16</span>
<div class="b" style="left:382.6px;top:558.1px;width:5.2px;height:4.2px;background:#fae8a0;border-radius:2px;"></div>
<span class="t" style="left:391.60px;top:552px;font-size:11px;line-height:14px;color:#fff;font-weight:700;letter-spacing:-0.307px;">Total Fees:</span>
<span class="t" style="left:504.70px;top:552px;font-size:11px;line-height:14px;color:#fff;font-weight:700;letter-spacing:0.041px;">-$204,709.30</span>
<div class="b" style="left:382.6px;top:585.15px;width:5.2px;height:4.2px;background:#a9d3f5;border-radius:2px;"></div>
<span class="t" style="left:391.60px;top:579px;font-size:11px;line-height:14px;color:#fff;font-weight:700;letter-spacing:-0.332px;">Net Proceeds:</span>
<span class="t" style="left:508.40px;top:579px;font-size:11px;line-height:14px;color:#fff;font-weight:700;letter-spacing:0.102px;">$252,711.86</span>
<div class="b" style="left:382.6px;top:599.0px;width:5.2px;height:4.2px;background:#f4b9a0;border-radius:2px;"></div>
<span class="t" style="left:391.60px;top:593px;font-size:11px;line-height:14px;color:#fff;font-weight:700;letter-spacing:-0.308px;">Net Profit %:</span>
<span class="t" style="left:538.00px;top:593px;font-size:11px;line-height:14px;color:#fff;font-weight:700;letter-spacing:0.199px;">55.2%</span>
<div class="b" style="left:603.2px;top:529.9px;width:5.2px;height:4.2px;background:#34a853;border-radius:2px;"></div>
<span class="t" style="left:611.90px;top:524px;font-size:11px;line-height:14px;color:#fff;font-weight:700;letter-spacing:-0.264px;">Sales:</span>
<span class="t" style="left:693.10px;top:524px;font-size:11px;line-height:14px;color:#fff;font-weight:700;letter-spacing:0.025px;">$400,410.23 (-13.7%)</span>
<span class="t" style="left:611.90px;top:538px;font-size:11px;line-height:14px;color:#fff;font-weight:700;letter-spacing:-0.211px;">Net Sales:</span>
<span class="t" style="left:693.10px;top:538px;font-size:11px;line-height:14px;color:#fff;font-weight:700;letter-spacing:0.025px;">$395,549.25 (-13.5%)</span>
<div class="b" style="left:603.2px;top:558.1px;width:5.2px;height:4.2px;background:#fbdc0a;border-radius:2px;"></div>
<span class="t" style="left:611.90px;top:552px;font-size:11px;line-height:14px;color:#fff;font-weight:700;letter-spacing:-0.307px;">Total Fees:</span>
<span class="t" style="left:695.10px;top:552px;font-size:11px;line-height:14px;color:#fff;font-weight:700;letter-spacing:-0.096px;">-$215,727.08 (+5.4%)</span>
<div class="b" style="left:603.2px;top:585.15px;width:5.2px;height:4.2px;background:#1e9be9;border-radius:2px;"></div>
<span class="t" style="left:611.90px;top:579px;font-size:11px;line-height:14px;color:#fff;font-weight:700;letter-spacing:-0.307px;">Net Proceeds:</span>
<span class="t" style="left:693.10px;top:579px;font-size:11px;line-height:14px;color:#fff;font-weight:700;letter-spacing:0.025px;">$179,822.17 (-28.8%)</span>
<div class="b" style="left:603.2px;top:599.0px;width:5.2px;height:4.2px;background:#f3743e;border-radius:2px;"></div>
<span class="t" style="left:611.90px;top:593px;font-size:11px;line-height:14px;color:#fff;font-weight:700;letter-spacing:-0.308px;">Net Profit %:</span>
<span class="t" style="left:738.50px;top:593px;font-size:11px;line-height:14px;color:#fff;font-weight:700;letter-spacing:0.088px;">45.5% (-9.8)</span>
<span class="t" style="left:1391.70px;top:329px;font-size:18.5px;line-height:26px;color:#fff;font-weight:700;letter-spacing:-0.130px;">8/6/25 - 11/5/25 (92 days)</span>
<div class="b" style="left:1706px;top:324px;width:42px;height:34px;border:1px solid #b8bcc4;border-radius:8px;"></div>
<svg style="left:1719px;top:333px" width="16" height="16" viewBox="0 0 16 16" fill="none" stroke="#fff" stroke-width="1.3" stroke-linecap="round" stroke-linejoin="round"><path d="M7.9 1.3V10.6M4.4 7.2L7.9 10.7L11.4 7.2M0.9 11.2V13Q0.9 14.6 2.5 14.6H13.3Q14.9 14.6 14.9 13V11.2"/></svg>
<span class="t" style="left:1391.70px;top:368px;font-size:15.5px;line-height:22px;color:#fff;letter-spacing:0.038px;">Avg Selling Price</span>
<span class="t" style="left:1701.20px;top:368px;font-size:15.5px;line-height:22px;color:#fff;letter-spacing:-0.044px;">$36.02</span>
<span class="t" style="left:1391.70px;top:396px;font-size:15.5px;line-height:22px;color:#fff;letter-spacing:0.172px;">Units Sold</span>
<span class="t" style="left:1693.10px;top:396px;font-size:15.5px;line-height:22px;color:#fff;letter-spacing:-0.122px;">156,140</span>
<span class="t" style="left:1391.70px;top:424px;font-size:15.5px;line-height:22px;color:#fff;letter-spacing:0.162px;">Units Returned</span>
<span class="t" style="left:1709.70px;top:424px;font-size:15.5px;line-height:22px;color:#fff;letter-spacing:-0.024px;">2,315</span>
<span class="t" style="left:1391.70px;top:452px;font-size:15.5px;line-height:22px;color:#fff;letter-spacing:0.240px;">Net Units Sold</span>
<span class="t" style="left:1693.10px;top:452px;font-size:15.5px;line-height:22px;color:#fff;letter-spacing:-0.122px;">153,825</span>
<span class="t" style="left:1391.70px;top:493px;font-size:15.5px;line-height:22px;color:#fff;letter-spacing:-0.545px;">Sales</span>
<span class="t" style="left:1650.90px;top:493px;font-size:15.5px;line-height:22px;color:#fff;letter-spacing:0.056px;">$5,707,111.88</span>
<span class="t" style="left:1391.70px;top:521px;font-size:15.5px;line-height:22px;color:#fff;font-weight:700;letter-spacing:-0.200px;">Net Sales</span>
<span class="t" style="left:1647.40px;top:521px;font-size:15.5px;line-height:22px;color:#fff;font-weight:700;letter-spacing:0.156px;">$5,626,500.89</span>
<span class="t" style="left:1391.70px;top:562px;font-size:15.5px;line-height:22px;color:#fff;font-weight:700;letter-spacing:-0.368px;">Total Fees</span>
<span class="t" style="left:1641.80px;top:562px;font-size:15.5px;line-height:22px;color:#fff;font-weight:700;letter-spacing:0.177px;">-$2,772,855.20</span>
<span class="t" style="left:1399.70px;top:590px;font-size:15.5px;line-height:22px;color:#fff;letter-spacing:0.064px;">Sponsored Product Fee</span>
<span class="t" style="left:1657.20px;top:590px;font-size:15.5px;line-height:22px;color:#fff;letter-spacing:-0.014px;">-$412,174.40</span>
<span class="t" style="left:1399.70px;top:618px;font-size:15.5px;line-height:22px;color:#fff;letter-spacing:-0.260px;">Referral Fee</span>
<span class="t" style="left:1657.20px;top:618px;font-size:15.5px;line-height:22px;color:#fff;letter-spacing:-0.014px;">-$824,689.66</span>
<span class="t" style="left:1399.70px;top:646px;font-size:15.5px;line-height:22px;color:#fff;letter-spacing:-0.058px;">FBA Fulfillment Fees</span>
<span class="t" style="left:1645.20px;top:646px;font-size:15.5px;line-height:22px;color:#fff;letter-spacing:-0.084px;">-$1,372,047.40</span>
<span class="t" style="left:1399.70px;top:674px;font-size:15.5px;line-height:22px;color:#fff;letter-spacing:0.251px;">Inbound Transportation Charge</span>
<span class="t" style="left:1674.30px;top:674px;font-size:15.5px;line-height:22px;color:#fff;">-$3,424.92</span>
<span class="t" style="left:1399.70px;top:702px;font-size:15.5px;line-height:22px;color:#fff;letter-spacing:0.103px;">Inbound Convenience Fee</span>
<span class="t" style="left:1657.20px;top:702px;font-size:15.5px;line-height:22px;color:#fff;letter-spacing:-0.014px;">-$106,890.89</span>
<span class="t" style="left:1399.70px;top:730px;font-size:15.5px;line-height:22px;color:#fff;letter-spacing:0.035px;">Long-Term Storage Fee</span>
<span class="t" style="left:1704.10px;top:730px;font-size:15.5px;line-height:22px;color:#fff;letter-spacing:0.069px;">-$0.63</span>
<span class="t" style="left:1399.70px;top:758px;font-size:15.5px;line-height:22px;color:#fff;letter-spacing:-0.020px;">FBA Inventory Storage Fee</span>
<span class="t" style="left:1665.90px;top:758px;font-size:15.5px;line-height:22px;color:#fff;letter-spacing:-0.025px;">-$49,944.51</span>
<span class="t" style="left:1399.70px;top:786px;font-size:15.5px;line-height:22px;color:#fff;letter-spacing:-0.094px;">FBA Disposal Order Fee</span>
<span class="t" style="left:1695.10px;top:786px;font-size:15.5px;line-height:22px;color:#fff;letter-spacing:0.120px;">-$89.09</span>
<span class="t" style="left:1399.70px;top:814px;font-size:15.5px;line-height:22px;color:#fff;letter-spacing:0.073px;">Run Lightning Deal Fee</span>
<span class="t" style="left:1677.40px;top:814px;font-size:15.5px;line-height:22px;color:#fff;letter-spacing:-0.347px;">-$1,000.02</span>
<div class="b" style="left:1392px;top:482px;width:356px;height:1.3px;background:#d1d5db;"></div>
<div class="b" style="left:1392px;top:550.6px;width:356px;height:1.3px;background:#d1d5db;"></div>
<div class="b" style="left:0px;top:825px;width:1819px;height:2px;background:#111827;"></div>
<div class="b" style="left:1767px;top:755px;width:56px;height:56px;background:#1c5fe8;border-radius:28px;box-shadow:0 2px 6px rgba(0,0,0,.35);"></div>
<svg width="1819" height="827" viewBox="0 0 1819 827"><path fill="#fff" d="M1792.2 771.9Q1792.9 778.1999999999999 1799.2 778.9Q1792.9 779.6 1792.2 785.9Q1791.5 779.6 1785.2 778.9Q1791.5 778.1999999999999 1792.2 771.9ZM1801.9 779.8Q1802.1080000000002 782.192 1804.5 782.4Q1802.1080000000002 782.608 1801.9 785.0Q1801.692 782.608 1799.3000000000002 782.4Q1801.692 782.192 1801.9 779.8ZM1802.2 789.8Q1802.4080000000001 792.192 1804.8 792.4Q1802.4080000000001 792.608 1802.2 795.0Q1801.992 792.608 1799.6000000000001 792.4Q1801.992 792.192 1802.2 789.8Z"/></svg>
</body></html>
